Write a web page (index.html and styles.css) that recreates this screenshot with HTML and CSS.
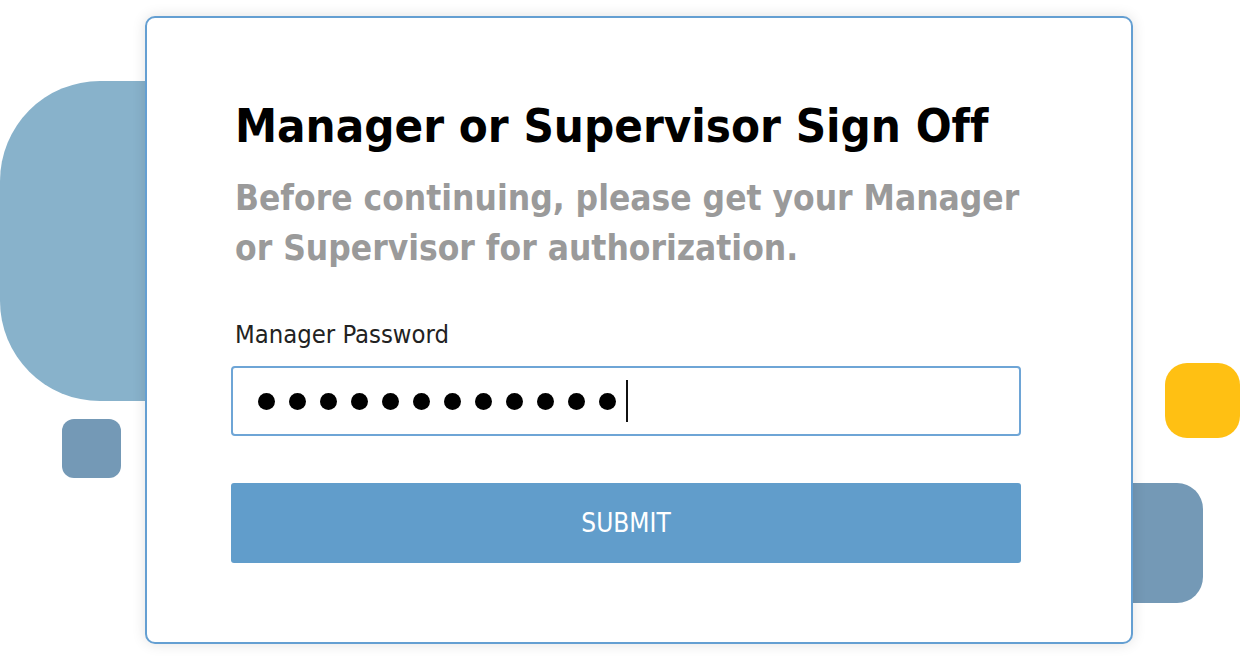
FILE: index.html
```html
<!DOCTYPE html>
<html lang="en">
<head>
  <meta charset="UTF-8">
  <meta name="viewport" content="width=device-width, initial-scale=1.0">
  <title>Manager Sign Off</title>
  <link rel="stylesheet" href="styles.css">
</head>
<body>

  <div class="stage">
    <!-- background decoration -->
    <div class="blob blob-big"></div>
    <div class="blob blob-small"></div>
    <div class="blob blob-yellow"></div>
    <div class="blob blob-right"></div>

    <div class="card">
      <h1>Manager or Supervisor Sign Off</h1>
      <p class="lead">Before continuing, please get your Manager or Supervisor for authorization.</p>

      <form class="signoff">
        <label for="pw">Manager Password</label>
        <div class="field" id="pw" role="textbox" aria-label="Manager Password">
          <span class="dot"></span><span class="dot"></span><span class="dot"></span><span class="dot"></span>
          <span class="dot"></span><span class="dot"></span><span class="dot"></span><span class="dot"></span>
          <span class="dot"></span><span class="dot"></span><span class="dot"></span><span class="dot"></span>
          <span class="caret"></span>
        </div>
        <button type="button" class="submit">SUBMIT</button>
      </form>
    </div>
  </div>

</body>
</html>
```

FILE: styles.css
```css
body {
  margin: 0;
  background: #fff;
  font-family: "DejaVu Sans Condensed", "DejaVu Sans", Verdana, sans-serif;
  font-stretch: condensed;
  font-variant-ligatures: none;
}
.stage {
  position: relative;
  width: 1241px;
  height: 660px;
  overflow: hidden;
  padding-top: 16px;
  box-sizing: border-box;
}

.blob {
  position: absolute;
}
.blob-big {
  left: 0; top: 81px;
  width: 220px; height: 320px;
  background: #88b2cb;
  border-radius: 100px 0 0 100px;
}
.blob-small {
  left: 62px; top: 419px;
  width: 59px; height: 59px;
  background: #7499b6;
  border-radius: 12px;
}
.blob-yellow {
  left: 1165px; top: 363px;
  width: 75px; height: 75px;
  background: #ffc013;
  border-radius: 22px;
}
.blob-right {
  left: 1080px; top: 483px;
  width: 123px; height: 120px;
  background: #7499b6;
  border-radius: 0 26px 26px 0;
}

.card {
  position: relative;
  z-index: 1;
  margin-left: 145px;
  width: 988px;
  height: 628px;
  box-sizing: border-box;
  background: #fff;
  border: 2px solid #649fd2;
  border-radius: 10px;
  box-shadow: 0 0 14px rgba(0,0,0,0.12);
  padding: 80px 110px 0 84px;
}

h1 {
  margin: 0 0 0 4px;
  font-size: 47px;
  font-weight: bold;
  color: #000;
  line-height: 56px;
}
.lead {
  margin: 19px -14px 0 4px;
  font-size: 35px;
  font-weight: bold;
  color: #9a9a9a;
  line-height: 50px;
}

.signoff {
  margin-top: 46px;
}
label {
  display: block;
  margin-left: 4px;
  font-size: 25.4px;
  color: #222;
  line-height: 30px;
}
.field {
  display: flex;
  align-items: center;
  gap: 14px;
  margin-top: 17px;
  height: 70px;
  box-sizing: border-box;
  border: 2px solid #6ea5d6;
  border-radius: 4px;
  padding-left: 25px;
}
.dot {
  width: 17px;
  height: 17px;
  border-radius: 50%;
  background: #000;
}
.caret {
  width: 2px;
  height: 42px;
  background: #111;
  margin-left: -4px;
}

.submit {
  display: block;
  width: 100%;
  margin-top: 47px;
  height: 80px;
  border: none;
  border-radius: 3px;
  background: #619dcb;
  color: #fff;
  font-family: "DejaVu Sans Condensed", "DejaVu Sans", Verdana, sans-serif;
  font-stretch: condensed;
  font-size: 26px;
  cursor: pointer;
}
```
